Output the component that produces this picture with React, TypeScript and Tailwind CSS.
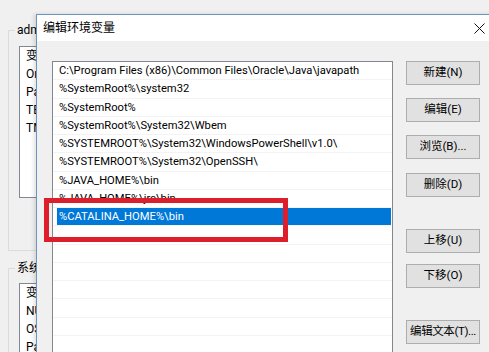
import React from 'react';

const paths = [
  'C:\\Program Files (x86)\\Common Files\\Oracle\\Java\\javapath',
  '%SystemRoot%\\system32',
  '%SystemRoot%',
  '%SystemRoot%\\System32\\Wbem',
  '%SYSTEMROOT%\\System32\\WindowsPowerShell\\v1.0\\',
  '%SYSTEMROOT%\\System32\\OpenSSH\\',
  '%JAVA_HOME%\\bin',
  '%JAVA_HOME%\\jre\\bin',
  '%CATALINA_HOME%\\bin',
  '',
  '',
  '',
  '',
  '',
  '',
];

const buttons = [
  { label: '新建(N)', gap: 'mt-0' },
  { label: '编辑(E)', gap: 'mt-[13px]' },
  { label: '浏览(B)...', gap: 'mt-[13px]' },
  { label: '删除(D)', gap: 'mt-[14px]' },
  { label: '上移(U)', gap: 'mt-[32px]' },
  { label: '下移(O)', gap: 'mt-[11px]' },
  { label: '编辑文本(T)...', gap: 'mt-[32px] tracking-[-0.4px]' },
];

const userVars = ['变量', 'OneDrive', 'Path', 'TEMP', 'TMP'];
const sysVars = ['变量', 'NUMBER_OF_PROCESSORS', 'OS', 'Path'];

const font = { fontFamily: 'Roboto, "Noto Sans CJK SC", sans-serif' };

function GroupBox({ title, items, top, listTop, listHeight, height }: { title: string; items: string[]; top: string; listTop: string; listHeight: string; height: string }) {
  return (
    <div className={`relative ml-[8px] ${top} ${height} w-[60px] border border-[#dcdcdc] border-r-0`}>
      <div className="absolute -top-[9px] left-[6px] bg-[#f0f0f0] px-[2px] text-[12px] leading-[16px] text-black">
        {title}
      </div>
      <div className={`ml-[10px] ${listTop} ${listHeight} border border-[#828790] bg-white overflow-hidden`}>
        {items.map((item, i) => (
          <div key={i} className="h-[18px] pl-[6px] text-[12px] leading-[18px] whitespace-nowrap text-black">
            {item}
          </div>
        ))}
      </div>
    </div>
  );
}

function EditDialog() {
  return (
    <div className="absolute left-[36px] top-[14px] w-[470px] h-[360px] border-l border-t border-[#6b94c2] bg-[#f0f0f0] shadow-[-2px_0_4px_rgba(0,0,0,0.12)]">
      <div className="h-[26px] bg-white flex items-center justify-between pl-[6px] pr-[21px]">
        <span className="text-[12px] text-black">编辑环境变量</span>
        <svg width="11" height="11" viewBox="0 0 11 11">
          <path d="M0.5 0.5 L10.5 10.5 M10.5 0.5 L0.5 10.5" stroke="#111" strokeWidth="1" />
        </svg>
      </div>
      <div className="flex pl-[15px] pt-[20px]">
        <div className="w-[341px] h-[300px] border border-[#828790] bg-white overflow-hidden">
          {paths.map((p, i) => {
            const selected = i === 8;
            return (
              <div key={i} className="h-[18.25px] border-b border-[#f3f3f3] pl-[4px] pr-[1px]">
                <div
                  className={`h-full pl-[2px] text-[11.2px] leading-[17px] whitespace-nowrap ${
                    selected ? 'bg-[#0078d7] text-white' : 'text-black'
                  }`}
                >
                  {p}
                </div>
              </div>
            );
          })}
        </div>
        <div className="flex flex-col ml-[13px]">
          {buttons.map((b) => (
            <div
              key={b.label}
              className={`${b.gap} w-[74px] h-[24px] border border-[#adadad] bg-[#e1e1e1] flex items-center justify-center text-[11.5px] whitespace-nowrap text-black`}
            >
              {b.label}
            </div>
          ))}
        </div>
      </div>
      <div className="absolute left-[7px] top-[183px] w-[244px] h-[44px] border-[5px] border-[#dc1f2a]" />
    </div>
  );
}

export default function App() {
  return (
    <div className="relative w-[489px] h-[352px] overflow-hidden bg-[#f0f0f0]" style={font}>
      <div className="flex flex-col pt-[30px]">
        <GroupBox title="adm" items={userVars} top="mt-0" listTop="mt-[15px]" listHeight="h-[152px]" height="h-[221px]" />
        <GroupBox title="系统" items={sysVars} top="mt-[17px]" listTop="mt-[14px]" listHeight="h-[120px]" height="h-[120px]" />
      </div>
      <EditDialog />
    </div>
  );
}
